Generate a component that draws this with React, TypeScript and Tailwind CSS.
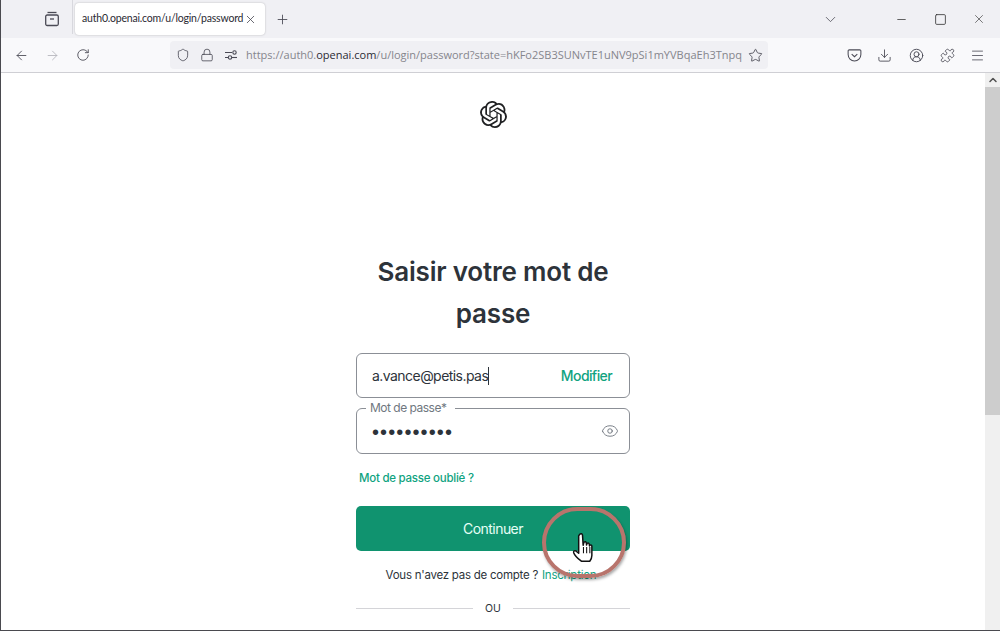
import { ArrowLeft, ArrowRight, ChevronDown, CircleUserRound, Download, Eye, Lock, Menu, Minus, Plus, Puzzle, RotateCw, Shield, Square, Star, X, ChevronUp } from "lucide-react";
import { SiOpenai } from "react-icons/si";

function ArchiveTabs() {
  return (
    <svg width="16" height="16" viewBox="0 0 16 16" fill="none" stroke="#4a4a55" strokeWidth="1.3">
      <path d="M3.5 1.5h9" />
      <rect x="1.7" y="4" width="12.6" height="10.5" rx="1.5" />
      <path d="M6 8h4" />
    </svg>
  );
}

function Pocket() {
  return (
    <svg width="15" height="15" viewBox="0 0 16 16" fill="none" stroke="#4a4a55" strokeWidth="1.1">
      <path d="M2.5 2h11a1.3 1.3 0 0 1 1.3 1.3V7a6.8 6.8 0 0 1-13.6 0V3.300A1.3 1.3 0 0 1 2.500 2z" />
      <path d="M5 6.500l3 2.800 3-2.800" />
    </svg>
  );
}

function HandCursor() {
  return (
    <svg width="24" height="34" viewBox="0 0 22 32" fill="#fff" stroke="#111" strokeWidth="1.4" strokeLinejoin="round">
      <path d="M7 2.200c1-1 2.400-.6 2.600.8l.6 9.500.8-3c1-.7 2-.3 2.200.8l.2 2 .5-1.600c1-.6 1.900-.2 2.100.9l.2 1.500.4-.8c1-.4 1.800.1 1.800 1.200v8.500c0 2.500-1 4.200-2 5.500H8.500C6.500 26 2.500 23 1.300 19.500c-.4-1.500.6-2.300 2-1.700L6 20 6 3.500z" />
      <path d="M10.500 14v6M13.500 14v6M16.500 14v6" strokeWidth="1" />
    </svg>
  );
}

export default function App() {
  return (
    <div className="relative flex h-[631px] w-[1000px] flex-col overflow-hidden border-b border-l border-[#4a4a4f] bg-white font-['Inter',sans-serif]">
      {/* tab strip */}
      <div className="flex h-[38px] shrink-0 items-center bg-[#f0f0f4] pl-[43px] font-['Open_Sans',sans-serif]">
        <ArchiveTabs />
        <div className="ml-[12px] h-[34px] w-px self-start bg-[#d8d8de]" />
        <div className="ml-[2px] flex h-[32px] w-[190px] items-center justify-between rounded bg-white pl-[7px] pr-[8px] shadow-[0_0_2px_rgba(0,0,0,0.25)]">
          <span className="whitespace-nowrap font-['Lato',sans-serif] text-[10.5px] tracking-[-0.2px] text-[#2b2a33]">auth0.openai.com/u/login/password</span>
          <X size={13} strokeWidth={1.5} className="shrink-0 text-[#4a4a55]" />
        </div>
        <Plus size={15} strokeWidth={1.4} className="ml-[10px] text-[#4a4a55]" />
        <ChevronDown size={17} strokeWidth={1.2} className="ml-[532px] text-[#55555f]" />
        <Minus size={13} strokeWidth={1.4} className="ml-[56px] text-[#333]" />
        <Square size={13} strokeWidth={1.5} className="ml-[26px] text-[#333]" />
        <X size={14} strokeWidth={1.1} className="ml-[25px] text-[#333]" />
      </div>

      {/* nav bar */}
      <div className="flex h-[35px] shrink-0 items-center border-b border-[#cfcfd4] bg-[#f9f9fb] pl-[13px] font-['Open_Sans',sans-serif]">
        <ArrowLeft size={15} strokeWidth={1.4} className="text-[#4a4a55]" />
        <ArrowRight size={15} strokeWidth={1.4} className="ml-[16px] text-[#b5b5bb]" />
        <RotateCw size={14} strokeWidth={1.5} className="ml-[16px] text-[#4a4a55]" />
        <div className="ml-[80px] flex h-[28px] w-[598px] items-center rounded bg-[#f0f0f4] pl-[6px]">
          <Shield size={14} strokeWidth={1.4} className="text-[#4a4a55]" />
          <Lock size={14} strokeWidth={1.4} className="ml-[10px] text-[#4a4a55]" />
          <svg width="14" height="14" viewBox="0 0 14 14" fill="none" stroke="#4a4a55" strokeWidth="1.1" className="ml-[10px]">
            <path d="M1 4.500h7M1 9.500h3" />
            <circle cx="10.500" cy="4.500" r="1.700" />
            <circle cx="6" cy="9.500" r="1.700" />
            <path d="M8 9.500h5" />
          </svg>
          <span className="ml-[8px] w-[500px] whitespace-nowrap text-[11px] text-[#85858c]">
            https://auth0.<span className="text-[#2b2a33]">openai.com</span>/u/login/password?state=hKFo2SB3SUNvTE1uNV9pSi1mYVBqaEh3Tnpq
          </span>
          <Star size={15} strokeWidth={1.4} className="ml-[2px] text-[#4a4a55]" />
        </div>
        <div className="ml-[79px]"><Pocket /></div>
        <Download size={15} strokeWidth={1.4} className="ml-[15px] text-[#4a4a55]" />
        <CircleUserRound size={15} strokeWidth={1.5} className="ml-[17px] text-[#4a4a55]" />
        <Puzzle size={15} strokeWidth={1.4} className="ml-[16px] text-[#4a4a55]" />
        <Menu size={15} strokeWidth={1.3} className="ml-[15px] text-[#4a4a55]" />
      </div>

      {/* page + scrollbar */}
      <div className="flex min-h-0 flex-1">
        <main className="flex w-[984px] flex-col items-center">
          <SiOpenai size={27} className="mt-[28px] text-[#202123]" />
          <div className="mt-[123px] flex w-[274px] flex-col">
            <h1 className="text-center text-[26px] font-semibold leading-[42px] tracking-[-0.2px] text-[#2d333a]">Saisir votre mot de passe</h1>
            <div className="mt-[18px] flex h-[45px] items-center justify-between rounded-[6px] border border-[#8b8f96] pl-[15px] pr-[17px]">
              <span className="border-r border-[#2d333a] text-[14px] leading-[18px] tracking-[-0.55px] text-[#2d333a]">a.vance@petis.pas</span>
              <span className="text-[14px] font-medium tracking-[-0.6px] text-[#10a37f]">Modifier</span>
            </div>
            <div className="relative mt-[10px] flex h-[46px] items-center justify-between rounded-[6px] border border-[#8b8f96] pl-[15px] pr-[10px]">
              <span className="absolute -top-[9px] left-[9px] bg-white pl-[4px] pr-[9px] text-[12px] leading-[16px] tracking-[-0.5px] text-[#6f7780]">Mot de passe*</span>
              <span className="pt-[1px] font-['Liberation_Sans',sans-serif] text-[20px] leading-[20px] tracking-[1.1px] text-[#2d333a]">••••••••••</span>
              <Eye size={18} strokeWidth={1.1} className="text-[#5f6670]" />
            </div>
            <a className="ml-[3px] mt-[16px] text-[11.5px] font-medium leading-[16px] tracking-[-0.25px] text-[#10a37f]">Mot de passe oublié ?</a>
            <button className="mt-[20px] h-[45px] rounded-[5px] bg-[#10936f] text-[14px] tracking-[-0.55px] text-[#e6fff6]">Continuer</button>
            <p className="mt-[16px] pr-[4px] text-center text-[11.5px] leading-[16px] tracking-[-0.25px] text-[#2d333a]">
              Vous n'avez pas de compte ? <span className="ml-[1px] text-[#10a37f]">Inscription</span>
            </p>
            <div className="mt-[16px] flex items-center">
              <div className="h-px flex-1 bg-[#d4d4d8]" />
              <span className="px-[12px] pt-[2px] text-[10.5px] leading-[16px] text-[#2d333a]">OU</span>
              <div className="h-px flex-1 bg-[#d4d4d8]" />
            </div>
          </div>
        </main>
        <div className="flex w-[15px] flex-col items-center bg-[#f0f0f0]">
          <ChevronUp size={12} strokeWidth={3} className="mt-[1px] text-[#505050]" />
          <div className="mt-[1px] h-[328px] w-full bg-[#cdcdcd]" />
        </div>
      </div>

      {/* click highlight drawn over the screenshot */}
      <div className="absolute left-[541px] top-[507px] h-[71px] w-[84px] rounded-full border-[4px] border-[#b8746c] shadow-[1px_2px_3px_rgba(0,0,0,0.35)] blur-[0.5px]" />
      <div className="absolute left-[571px] top-[532px]">
        <HandCursor />
      </div>
    </div>
  );
}
